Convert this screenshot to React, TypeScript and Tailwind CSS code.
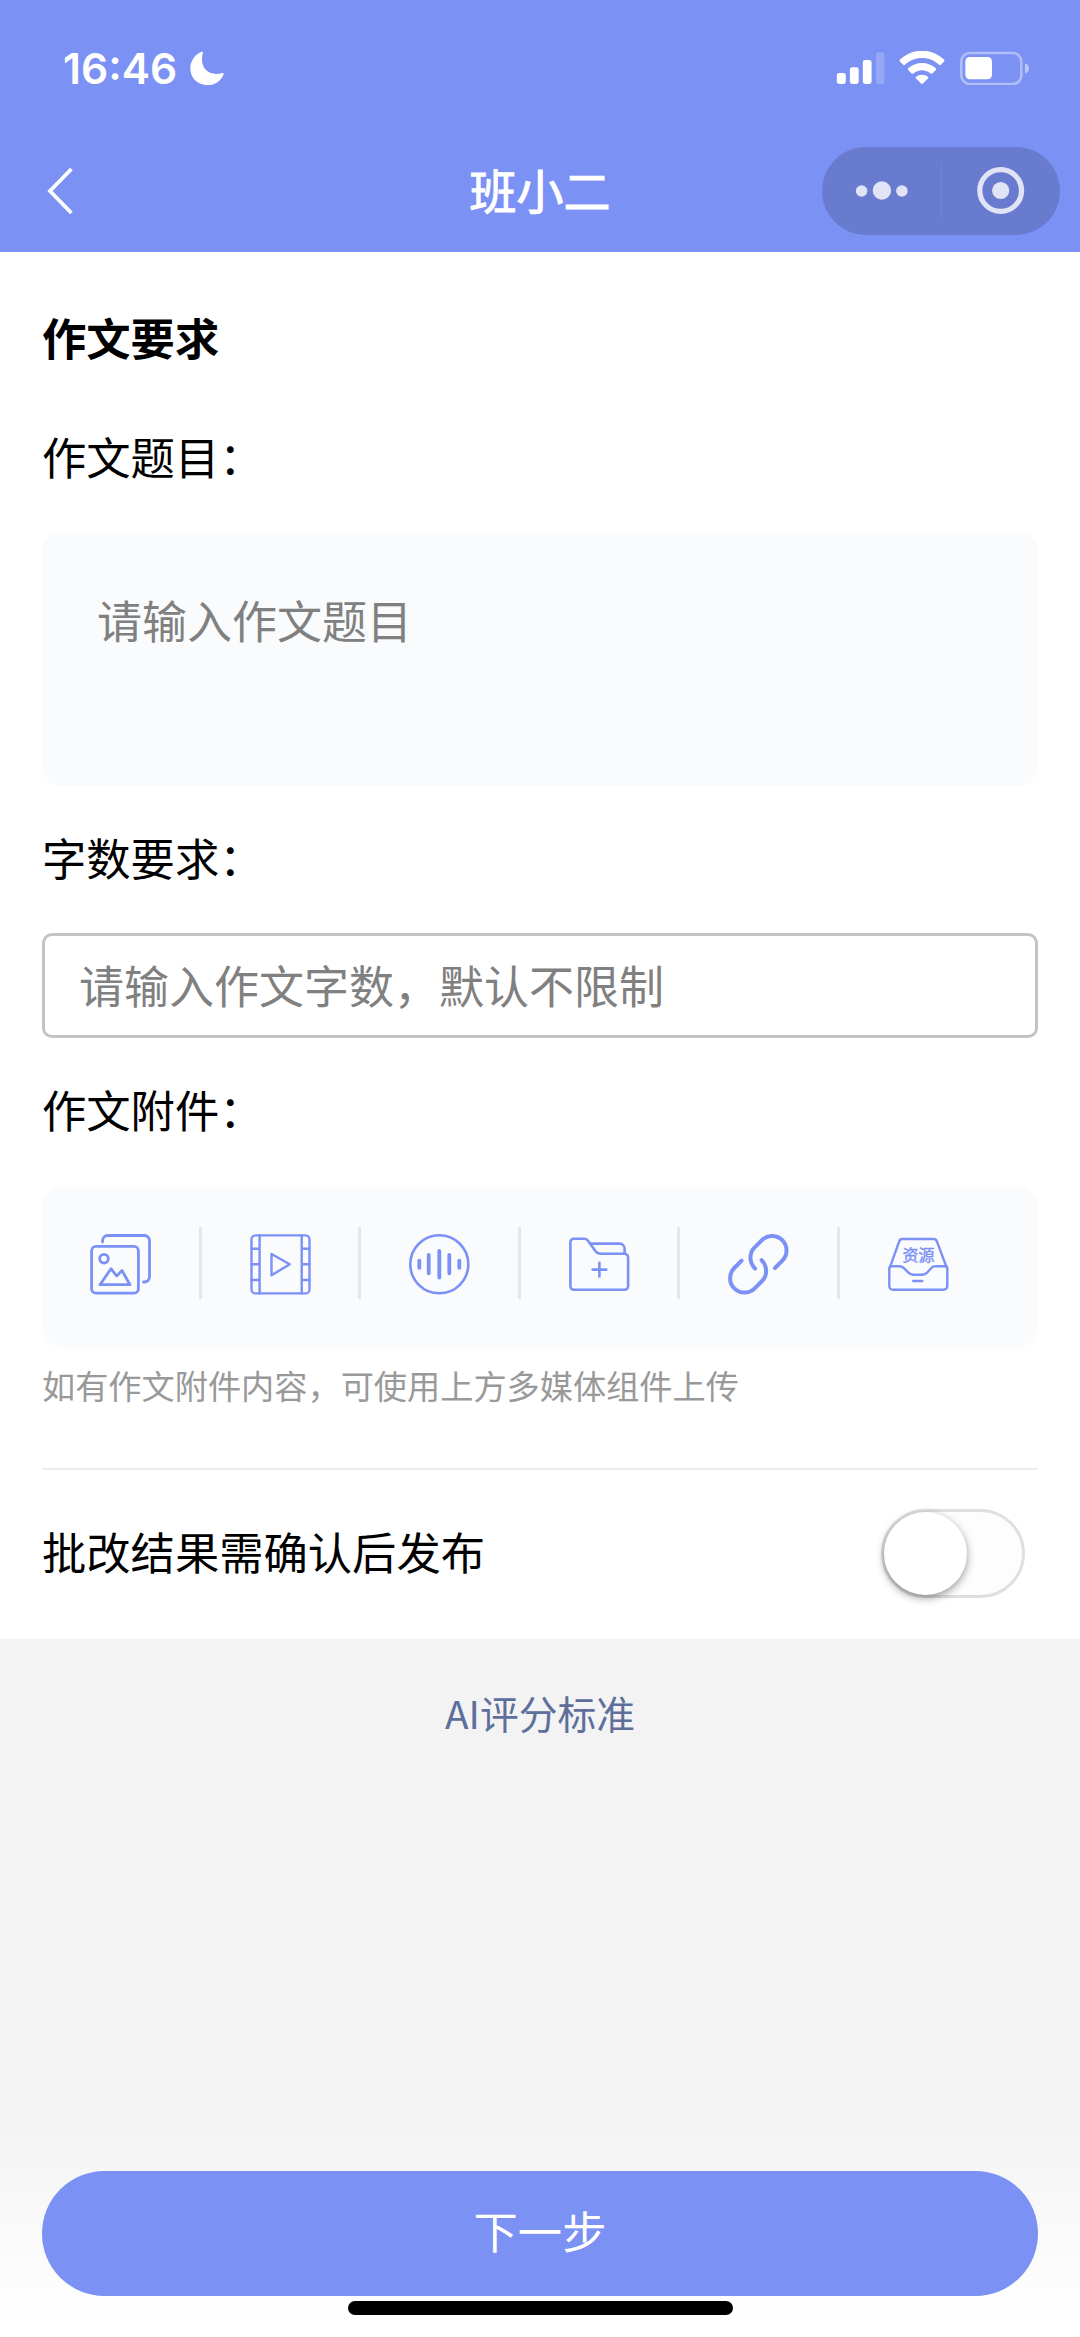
/**
 * Страница создания задания по сочинению (мини-приложение «班小二»)
 * — Статус-бар и шапка с капсулой
 * — Форма требований к сочинению
 * — Кнопка перехода к следующему шагу
 */

import React, { useState } from 'react';

/* Status bar icons */
const MoonIcon = () => (
  <svg className="mt-[51px] ml-[12px] h-[34px] w-[34px]" viewBox="0 0 34 34" fill="white">
    <path d="M11.6.8c.9-.4 1.7.2 1.3 1.2-1.6 4.500-1.400 11.600 2.200 16.100 4.200 5.200 11.600 5.600 17.200 3.900 1-.3 1.600.4 1.200 1.400C31 30 25 34.100 17.400 34.100 7.800 34.100.3 27 .3 17.600.3 10 4.800 3.700 11.600.8z" />
  </svg>
);

const SignalIcon = () => (
  <svg className="h-[34px] w-[49px]" viewBox="0 0 49 34" fill="white">
    <rect x="0.8" y="22" width="9" height="11" rx="2.400" />
    <rect x="13.900" y="16.300" width="8.800" height="16.700" rx="2.400" />
    <rect x="26.800" y="9" width="8.800" height="24" rx="2.400" />
    <rect x="40" y="1.300" width="8.500" height="31.700" rx="2.400" opacity="0.200" />
  </svg>
);

const WifiIcon = () => (
  <svg className="h-[34px] w-[46px]" viewBox="0 0 46 34" fill="white">
    <path d="M23 -0.300c8.600 0 16.300 3.400 22 8.900.6.600.6 1.200.1 1.800l-3.300 3.400c-.5.500-1.200.5-1.700 0C35.600 9.600 29.600 7.100 23 7.100S10.400 9.600 5.900 13.800c-.5.500-1.200.5-1.700 0L.9 10.400c-.5-.6-.5-1.200.1-1.800C6.700 3.100 14.400-.3 23-.3z" />
    <path d="M23 11.900c5.300 0 10.100 2 13.800 5.400.5.500.5 1.200 0 1.700l-3.400 3.400c-.5.500-1.100.5-1.700.1-2.300-2-5.400-3.300-8.700-3.300s-6.400 1.300-8.700 3.300c-.6.400-1.200.4-1.700-.1L9.200 19c-.5-.5-.5-1.200 0-1.700 3.700-3.400 8.500-5.400 13.800-5.400z" />
    <path d="M23 23.700c2.200 0 4.300.8 5.900 2.100.6.500.6 1.100.1 1.700l-5.100 5.100c-.5.500-1.300.5-1.800 0L17 27.500c-.5-.6-.5-1.200.1-1.700 1.600-1.300 3.700-2.100 5.900-2.100z" />
  </svg>
);

const BatteryIcon = () => (
  <svg className="h-[34px] w-[70px]" viewBox="0 0 70 34">
    <rect x="1.300" y="2" width="60" height="31" rx="8.500" fill="none" stroke="white" strokeWidth="2.600" opacity="0.400" />
    <path d="M65 12.500c2.400.7 4 2.600 4 5s-1.600 4.300-4 5z" fill="white" opacity="0.500" />
    <rect x="5.300" y="6" width="26.700" height="22.300" rx="4.500" fill="white" />
  </svg>
);

/* Attachment icons */
const iconProps = {
  className: 'mt-[7.5px] h-[61px] w-[61px]',
  viewBox: '0 0 61 61',
  fill: 'none',
  stroke: '#7b91f5',
  strokeLinecap: 'round',
  strokeLinejoin: 'round',
} as const;

const ImageIcon = () => (
  <svg {...iconProps} strokeWidth="2.8">
    <path d="M12.600 8V6.500a5 5 0 0 1 5-5H54.500a5 5 0 0 1 5 5V43a5 5 0 0 1-5 5H53.500" />
    <rect x="1.600" y="12.400" width="46.800" height="46.800" rx="4.500" />
    <circle cx="14" cy="24.700" r="4.300" />
    <path d="M10 50.700L21 34.700L26.700 42L32 36.500L40 50.700Z" />
  </svg>
);

const VideoIcon = () => (
  <svg {...iconProps} strokeWidth="2.4">
    <rect x="1.500" y="1.400" width="58" height="58" rx="4" />
    <path d="M9.600 1.400V59.400M51.700 1.400V59.400M1.500 14.700H9.600M1.500 30.300H9.600M1.500 46H9.600M51.700 14.700H59.500M51.700 30.300H59.500M51.700 46H59.500" />
    <path d="M21.500 20L39.700 30.300L21.500 41.300Z" />
  </svg>
);

const AudioIcon = () => (
  <svg {...iconProps} strokeWidth="3.8">
    <circle cx="30.300" cy="30.300" r="29" strokeWidth="2.600" />
    <path d="M10.300 26.600V33.800M19.700 21V39.300M30.300 17V43.600M40.300 21V39.300M50.300 26.600V33.800" />
  </svg>
);

const FolderIcon = () => (
  <svg {...iconProps} strokeWidth="2.6">
    <path d="M1.400 52.300V8.200a3.500 3.500 0 0 1 3.500-3.500H15.500c1.800 0 2.700.6 3.700 2.200L26 16.500c1.700 2.400 3.400 3.300 6.200 3.300H55.600a3.500 3.500 0 0 1 3.500 3.500V52.300a3.500 3.500 0 0 1-3.500 3.500H4.900a3.500 3.500 0 0 1-3.500-3.500z" />
    <path d="M21.500 9.600H50.600a5 5 0 0 1 5 5V19.800" />
    <path d="M23.600 35.600H37.300M30.400 28.800V42.400" />
  </svg>
);

const LinkIcon = () => (
  <svg {...iconProps} strokeWidth="4">
    <path d="M47 34L54.300 26.600A14.400 14.400 0 0 0 33.900 6.200L26.500 13.600C21 19 21 28.500 27 34.500" />
    <path d="M13.600 26.600L6.300 34A14.400 14.400 0 0 0 26.700 54.400L34.100 47C39.600 41.600 39.600 32.100 33.600 26.100" />
  </svg>
);

const ResourceIcon = () => (
  <svg {...iconProps} strokeWidth="2.4">
    <path d="M2 33.200L11.200 7.300C11.800 5.700 12.600 5 14.200 5H45.800C47.400 5 48.300 5.700 48.900 7.300L58.500 33.200" />
    <path d="M1.300 34.300a2 2 0 0 1 2-2H11c2 0 3.300.4 4.700 1.700L20.500 38.700C22 40.200 23 40.700 25 40.700H34.500C36.500 40.700 37.500 40.200 39 38.700L43.300 34C44.500 32.700 45.700 32.300 47.500 32.300H57.300a2 2 0 0 1 2 2V52a3.800 3.800 0 0 1-3.800 3.800H5.100A3.800 3.800 0 0 1 1.300 52z" />
    <path d="M25.300 47H34.300" />
    <text x="30.600" y="26.900" textAnchor="middle" fontSize="16" fill="#7b91f5" strokeWidth="0.400">资源</text>
  </svg>
);

const ATTACHMENTS = [
  { key: 'image', Icon: ImageIcon },
  { key: 'video', Icon: VideoIcon },
  { key: 'audio', Icon: AudioIcon },
  { key: 'folder', Icon: FolderIcon },
  { key: 'link', Icon: LinkIcon },
  { key: 'resource', Icon: ResourceIcon },
];

const Label: React.FC<{ className: string; children: React.ReactNode }> = ({ className, children }) => (
  <div className={`h-[60px] text-[44.3px] leading-[60px] ${className}`}>{children}</div>
);

const App: React.FC = () => {
  const [needConfirm, setNeedConfirm] = useState(false);

  return (
    <div className="flex h-[2337px] w-[1080px] flex-col overflow-hidden bg-[#f3f3f3] font-['Noto_Sans_CJK_SC',sans-serif] text-black">
      {/* Header */}
      <header className="h-[252px] shrink-0 bg-[#7b91f4] text-white">
        <div className="flex h-[132px] justify-between pr-[50px] pl-[63px]">
          <div className="flex">
            <span className="mt-[44px] w-[115px] font-['Inter',sans-serif] text-[42.5px] leading-[50px] font-semibold whitespace-nowrap">16:46</span>
            <MoonIcon />
          </div>
          <div className="flex pt-[51px]">
            <SignalIcon />
            <div className="ml-[14px]"><WifiIcon /></div>
            <div className="ml-[15px]"><BatteryIcon /></div>
          </div>
        </div>
        <div className="grid h-[120px] grid-cols-[1fr_auto_1fr] pr-5 pl-[46px]">
          <button className="mt-[35px] h-[48px] w-[28px]">
            <svg className="h-[48px] w-[28px]" viewBox="0 0 28 48" fill="none" stroke="white" strokeWidth="3.8">
              <path d="M25.400 2L4 24L25.400 46" />
            </svg>
          </button>
          <h1 className="-ml-[26px] h-[64px] pt-[25px] text-[47px] leading-[64px] [-webkit-text-stroke:1px_white]">班小二</h1>
          <div className="mt-[15px] flex h-[88px] w-[238px] items-center justify-self-end rounded-full bg-[#697bce]">
            <svg className="h-[88px] w-[238px]" viewBox="0 0 238 88" fill="#e1e4f5">
              <circle cx="39.600" cy="44" r="5.800" />
              <circle cx="59.900" cy="43.500" r="9.200" />
              <circle cx="79.900" cy="44" r="5.800" />
              <rect x="118.600" y="16" width="1.500" height="55" fill="#7082d4" />
              <circle cx="178.700" cy="43.500" r="20.900" fill="none" stroke="#e1e4f5" strokeWidth="5.200" />
              <circle cx="178.700" cy="43.500" r="8.600" />
            </svg>
          </div>
        </div>
      </header>

      {/* Form */}
      <main className="h-[1387px] shrink-0 bg-white px-[42px] pt-[55px]">
        <Label className="font-bold">作文要求</Label>

        <Label className="mt-[59px]">作文题目：</Label>
        <div className="mt-[46px] h-[254px] rounded-[20px] bg-[#fafbfd] px-[55px] pt-[58px] text-[45px] leading-[60px] text-[#808080]">
          请输入作文题目
        </div>

        <Label className="mt-[41px]">字数要求：</Label>
        <div className="mt-[46px] h-[105px] rounded-[10px] border-[3px] border-[#c3c3c3] pt-[19px] pl-[34px] text-[45px] leading-[60px] text-[#808080]">
          请输入作文字数，默认不限制
        </div>

        <Label className="mt-[41px]">作文附件：</Label>
        <div className="mt-[46px] flex h-[164px] rounded-3xl bg-[#fafbfd] pt-[41.5px]">
          {ATTACHMENTS.map(({ key, Icon }, i) => (
            <div key={key} className="flex w-[159.6px] justify-between pl-12">
              <Icon />
              {i < ATTACHMENTS.length - 1 && <div className="h-[72px] w-[3px] bg-[#e5e6e7]" />}
            </div>
          ))}
        </div>
        <p className="mt-4 text-[33.2px] leading-[40px] text-[#999999]">如有作文附件内容，可使用上方多媒体组件上传</p>

        <div className="mt-[63px] h-[2px] bg-[#ededed]" />
        <div className="flex h-[167px] items-center justify-between pr-[13px]">
          <span className="pb-[5px] text-[44.3px] leading-[60px]">批改结果需确认后发布</span>
          <button
            onClick={() => setNeedConfirm(!needConfirm)}
            className={`flex h-[89px] w-[144px] rounded-full border-[3px] ${
              needConfirm ? 'justify-end border-[#7b91f4] bg-[#7b91f4]' : 'border-[#dfdfdf] bg-[#fdfdfd]'
            }`}
          >
            <span className="size-[83px] rounded-full bg-white shadow-[0_3px_8px_rgba(0,0,0,0.4)]" />
          </button>
        </div>
      </main>

      <div className="pt-[46px] text-center text-[38.8px] leading-[54px] text-[#5e6f9b]">AI评分标准</div>

      {/* Footer */}
      <footer className="mt-auto flex h-[237px] shrink-0 flex-col items-center bg-linear-to-b from-[#f3f3f3] from-5% to-white to-95% px-[42px] pt-[71px]">
        <button className="h-[124.5px] w-full rounded-full bg-[#7b91f4] pb-[5px] text-[44.3px] leading-[115px] text-white">下一步</button>
        <div className="mt-[5.5px] h-[14px] w-[385px] rounded-full bg-black" />
      </footer>
    </div>
  );
};

export default App;
